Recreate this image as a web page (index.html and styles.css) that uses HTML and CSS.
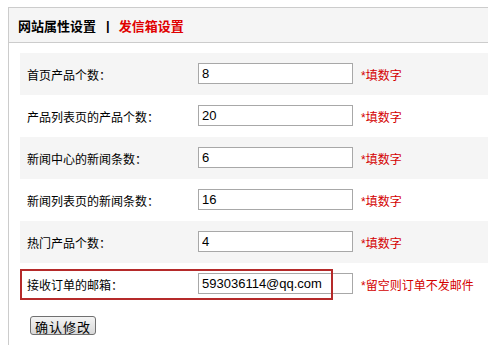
FILE: index.html
```html
<!DOCTYPE html>
<html lang="zh-CN">
    <head>
        <meta charset="UTF-8">
        <title>网站属性设置</title>
        <link rel="stylesheet" href="styles.css">
    </head>
    <body>
        <div class="panel">
            <div class="panel-head">
                <span class="tab">网站属性设置</span>
                <span class="sep">|</span>
                <span class="tab tab-red">发信箱设置</span>
            </div>

            <form class="panel-body">
                <div class="row alt">
                    <label>首页产品个数：</label>
                    <input type="text" value="8">
                    <span class="hint">*填数字</span>
                </div>
                <div class="row">
                    <label>产品列表页的产品个数：</label>
                    <input type="text" value="20">
                    <span class="hint">*填数字</span>
                </div>
                <div class="row alt">
                    <label>新闻中心的新闻条数：</label>
                    <input type="text" value="6">
                    <span class="hint">*填数字</span>
                </div>
                <div class="row">
                    <label>新闻列表页的新闻条数：</label>
                    <input type="text" value="16">
                    <span class="hint">*填数字</span>
                </div>
                <div class="row alt">
                    <label>热门产品个数：</label>
                    <input type="text" value="4">
                    <span class="hint">*填数字</span>
                </div>
                <div class="row">
                    <label>接收订单的邮箱：</label>
                    <input type="text" value="593036114@qq.com">
                    <span class="hint">*留空则订单不发邮件</span>
                    <span class="mark"></span>
                </div>

                <button type="button" class="btn">确认修改</button>
            </form>
        </div>
    </body>
</html>
```

FILE: styles.css
```css
body {
    margin: 7px 0 0 8px;
    font-family: "Liberation Sans", "Noto Sans CJK SC", sans-serif;
    font-size: 12px;
    color: #000;
    background-color: #fff;
}

.panel {
    height: 337px;
    border-top: 1px solid #cccccc;
    border-left: 1px solid #cccccc;
}

.panel-head {
    height: 34px;
    padding-left: 9px;
    display: flex;
    align-items: center;
    background-color: #f5f5f5;
    border-bottom: 1px solid #cccccc;
    font-size: 13px;
    font-weight: bold;
}

.sep {
    margin: 0 9px 0 10px;
}

.tab-red {
    color: #e00000;
}

.panel-body {
    margin: 0;
    padding: 10px 0 0 11px;
}

.row {
    position: relative;
    height: 42px;
    display: flex;
    align-items: center;
    padding-left: 7px;
}

.row.alt {
    background-color: #f5f5f5;
}

.row label {
    width: 171px;
}

.row input {
    width: 155px;
    height: 21px;
    box-sizing: border-box;
    padding: 0 3px;
    border: 1px solid #a8a8a8;
    font-family: "Liberation Sans", sans-serif;
    font-size: 13px;
    color: #000;
    margin-top: -1px;
}

.hint {
    margin-left: 8px;
    color: #d40000;
}

.mark {
    position: absolute;
    left: 0;
    top: 6px;
    width: 313px;
    height: 31px;
    box-sizing: border-box;
    border: 2px solid #b52a2a;
    pointer-events: none;
}

.btn {
    display: block;
    margin: 11px 0 0 10px;
    width: 66px;
    height: 19px;
    padding: 0;
    font-family: "Liberation Sans", "Noto Sans CJK SC", sans-serif;
    font-size: 13px;
    letter-spacing: 1px;
    color: #000;
    background: linear-gradient(#f4f4f4, #d8d8d8);
    border: 1px solid #707070;
    border-radius: 3px;
}
```
